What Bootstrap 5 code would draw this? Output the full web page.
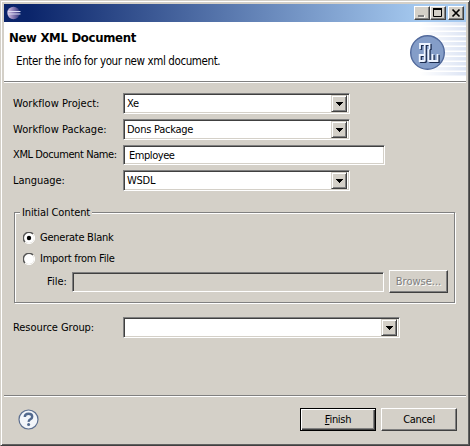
<!DOCTYPE html>
<html lang="en">
<head>
<meta charset="utf-8">
<title>New XML Document</title>
<link href="https://cdn.jsdelivr.net/npm/bootstrap@5.3.0/dist/css/bootstrap.min.css" rel="stylesheet">
<style>
body{font:11px/14px "DejaVu Sans Condensed","DejaVu Sans",sans-serif;font-stretch:condensed;color:#000;background:#d4d0c8;overflow:hidden}
.win{width:470px;height:446px;background:#d4d0c8;border:1px solid #d4d0c8;border-right-color:#404040;border-bottom-color:#404040;box-shadow:inset 1px 1px #fff,inset -1px -1px #606060;padding:3px}
.titlebar{height:18px;background:linear-gradient(90deg,#0a246a 5%,#a6caf0 91%);padding:0 2px 0 3px}
.cap{width:16px;height:14px;padding:0}
.cap-close{margin-left:2px}
.raised{background:#d4d0c8;border:1px solid;border-color:#fff #404040 #404040 #fff;box-shadow:inset -1px -1px #808080;border-radius:0}
.banner{height:59px;background:#fff;padding:8px 0 0 5px;position:relative}
.banner h1{font:bold 13px/16px "DejaVu Sans Condensed","DejaVu Sans",sans-serif;font-stretch:condensed;margin:0;letter-spacing:-.3px}
.banner p{margin:8px 0 0 7px;font-size:11.5px;letter-spacing:-.4px}
.logo{position:absolute;right:0;top:0}
.rule{height:2px;background:#808080;border-bottom:1px solid #fff}
.fields{padding:10px 0 0 9px}
.lab{width:110px;white-space:nowrap;letter-spacing:.05px}
.lab-doc{letter-spacing:-.4px}
.lab-tight{letter-spacing:-.05px}
.sunk{background:#fff;border:1px solid;border-color:#808080 #fff #fff #808080;box-shadow:inset 1px 1px #404040,inset -1px -1px #d4d0c8;border-radius:0;color:#000;font-size:11px;line-height:14px;letter-spacing:-.25px}
.combo{width:227px;height:21px;padding:2px 2px 2px 3px}
.wide{width:277px}
.arrow{width:16px;height:17px;border-color:#d4d0c8 #404040 #404040 #d4d0c8;box-shadow:inset 1px 1px #fff,inset -1px -1px #808080}
.entry{width:262px;height:20px;padding:1px 3px 1px 5px;letter-spacing:-.45px}
.group{width:441px;height:91px;margin:21px 0 0 1px;border:1px solid #808080;box-shadow:1px 1px #fff,inset 1px 1px #fff;padding:14px 6px 0 8px;position:relative}
.legend-text{position:absolute;left:5px;top:-7px;background:#d4d0c8;padding:0 2px 0 2px;font-size:11px;letter-spacing:-.12px}
.radio-row{height:21px;gap:5px;letter-spacing:-.25px}
.file-row{margin-top:1px}
.file-box{width:312px;height:20px;background:#d4d0c8}
.pbtn{height:23px;font-size:11px;padding:0;line-height:14px}
.browse{width:59px;margin-left:5px;color:#808080;text-shadow:1px 1px #fff}
.act{width:76px;letter-spacing:-.3px}
.act+.act{margin-left:5px}
.resource{margin-top:14px}
.deflt{border-color:#000;box-shadow:inset 1px 1px #fff,inset -1px -1px #404040,inset -2px -2px #808080}
.foot{padding:0 9px 0 14px;height:45px}
</style>
</head>
<body>
<div class="win d-flex flex-column">
  <div class="titlebar d-flex align-items-center">
    <svg width="14" height="14" viewBox="0 0 14 14"><defs><linearGradient id="ec" x2="1"><stop stop-color="#d8c8e4"/><stop offset=".45" stop-color="#8d7fb6"/><stop offset="1" stop-color="#30357c"/></linearGradient></defs><circle cx="6.5" cy="7" r="6.2" fill="url(#ec)"/><path d="M1 5.5h12.5M1 8h12.5" stroke="#dcdcf4"/></svg>
    <div class="cap raised ms-auto d-flex"><svg width="14" height="12"><path d="M4 9.5h6" stroke="#fff" stroke-width="2"/><path d="M3 9h6" stroke="#808080" stroke-width="2"/></svg></div>
    <div class="cap raised d-flex"><svg width="14" height="12"><path d="M2.5 2.5h8v7h-8z" fill="none" stroke="#000"/><path d="M2 2h9" stroke="#000" stroke-width="2"/></svg></div>
    <div class="cap cap-close raised d-flex"><svg width="14" height="12"><path d="M3.5 2.5l7 7M10.5 2.5l-7 7" stroke="#000" stroke-width="1.7"/></svg></div>
  </div>
  <header class="banner">
    <h1>New XML Document</h1>
    <p>Enter the info for your new xml document.</p>
    <svg class="logo" width="76" height="59" viewBox="0 0 76 59">
      <defs><linearGradient id="fade"><stop stop-color="#fff"/><stop offset="1" stop-color="#fff" stop-opacity="0"/></linearGradient>
      <pattern id="bars" width="4" height="5" patternUnits="userSpaceOnUse"><rect width="4" height="3.500" fill="#dce4f4"/></pattern></defs>
      <rect x="30" width="46" height="55" fill="url(#bars)"/><rect x="30" width="46" height="59" fill="url(#fade)"/>
      <circle cx="37.500" cy="30.500" r="16.800" fill="#849dc8" stroke="#526a9c" stroke-width="1.400"/>
      <g fill="none" stroke-width="1.800">
        <g stroke="#1b2c50" transform="translate(1.3 1)"><path id="mk" d="M30 27v-5h9.500v5M34.700 22v17.500M34.700 33h-5v6h5M38.500 27v12.500M42.500 32v7M38.500 39h9v-7"/></g>
        <use href="#mk" stroke="#eef4ff"/>
      </g>
    </svg>
  </header>
  <div class="rule"></div>
  <main class="fields flex-grow-1">
    <div class="d-flex flex-column" style="gap:5px">
      <div class="d-flex align-items-center"><label class="lab">Workflow Project:</label><div class="combo sunk d-flex align-items-center justify-content-between"><span>Xe</span><span class="arrow raised d-flex"><svg width="14" height="15" shape-rendering="crispEdges"><path d="M4 6h7v1h-1v1h-1v1h-1v1h-1v-1h-1v-1h-1v-1h-1z"/></svg></span></div></div>
      <div class="d-flex align-items-center"><label class="lab">Workflow Package:</label><div class="combo sunk d-flex align-items-center justify-content-between"><span>Dons Package</span><span class="arrow raised d-flex"><svg width="14" height="15" shape-rendering="crispEdges"><path d="M4 6h7v1h-1v1h-1v1h-1v1h-1v-1h-1v-1h-1v-1h-1z"/></svg></span></div></div>
      <div class="d-flex align-items-center"><label class="lab lab-doc" for="docname">XML Document Name:</label><input id="docname" class="entry sunk" value="Employee"></div>
      <div class="d-flex align-items-center"><label class="lab lab-tight">Language:</label><div class="combo sunk d-flex align-items-center justify-content-between"><span>WSDL</span><span class="arrow raised d-flex"><svg width="14" height="15" shape-rendering="crispEdges"><path d="M4 6h7v1h-1v1h-1v1h-1v1h-1v-1h-1v-1h-1v-1h-1z"/></svg></span></div></div>
    </div>
    <section class="group">
      <div class="legend-text">Initial Content</div>
      <div class="radio-row d-flex align-items-center"><svg width="12" height="12"><circle cx="6" cy="6" r="5" fill="#fff"/><path d="M2 10A5.500 5.500 0 0 1 10 2" fill="none" stroke="#555" stroke-width="1.400"/><path d="M10 2A5.500 5.500 0 0 1 2 10" fill="none" stroke="#fff"/><circle cx="6" cy="6" r="2.200"/></svg><span>Generate Blank</span></div>
      <div class="radio-row d-flex align-items-center"><svg width="12" height="12"><circle cx="6" cy="6" r="5" fill="#fff"/><path d="M2 10A5.500 5.500 0 0 1 10 2" fill="none" stroke="#555" stroke-width="1.400"/><path d="M10 2A5.500 5.500 0 0 1 2 10" fill="none" stroke="#fff"/></svg><span>Import from File</span></div>
      <div class="file-row d-flex align-items-center justify-content-end"><span class="me-auto ps-4">File:</span><div class="file-box sunk"></div><button class="pbtn browse raised">Browse...</button></div>
    </section>
    <div class="resource d-flex align-items-center"><label class="lab lab-tight">Resource Group:</label><div class="combo wide sunk d-flex align-items-center justify-content-end"><span class="arrow raised d-flex"><svg width="14" height="15" shape-rendering="crispEdges"><path d="M4 6h7v1h-1v1h-1v1h-1v1h-1v-1h-1v-1h-1v-1h-1z"/></svg></span></div></div>
  </main>
  <div class="rule"></div>
  <footer class="foot d-flex align-items-center">
    <svg width="21" height="21" viewBox="0 0 21 21"><circle cx="10.500" cy="10.500" r="9.500" fill="#f2f5fa" stroke="#5c6f90" stroke-width="1.200"/><path d="M6.800 8q0-3.300 3.700-3.300t3.700 3q0 1.600-1.800 2.600t-1.700 2.600" fill="none" stroke="#52698e" stroke-width="2.400"/><circle cx="10.600" cy="15.600" r="1.500" fill="#52698e"/></svg>
    <button class="pbtn act raised deflt ms-auto"><u>F</u>inish</button>
    <button class="pbtn act raised">Cancel</button>
  </footer>
</div>
</body>
</html>
